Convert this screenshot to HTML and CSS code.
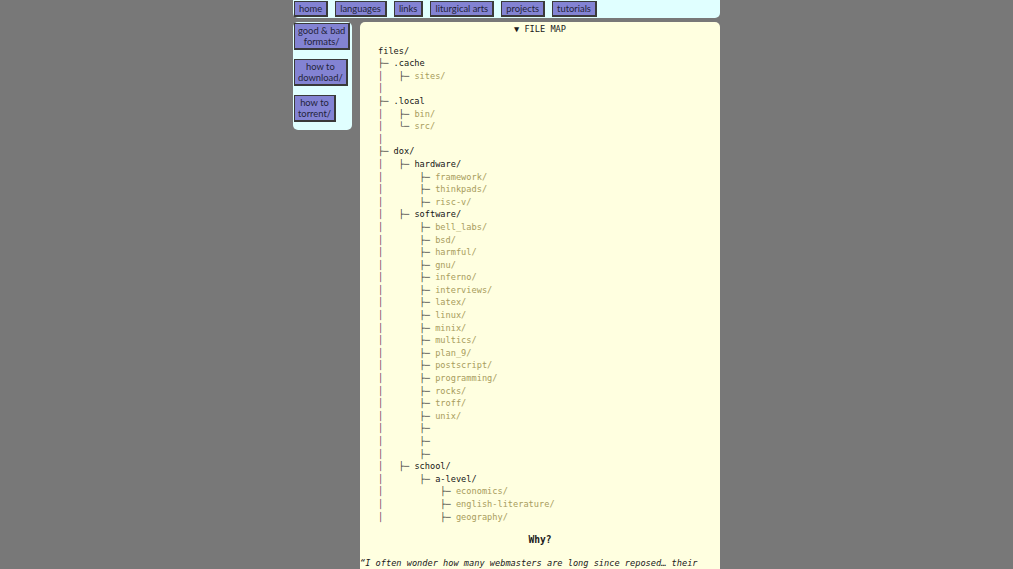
FILE: index.html
```html
<!DOCTYPE html>
<html>
<head>
<meta charset="utf-8">
<title>files</title>
<link rel="stylesheet" href="styles.css">
</head>
<body>
<div class="page">
  <nav class="topnav">
    <a class="btn" href="#">home</a>
    <a class="btn" href="#">languages</a>
    <a class="btn" href="#">links</a>
    <a class="btn" href="#">liturgical arts</a>
    <a class="btn" href="#">projects</a>
    <a class="btn" href="#">tutorials</a>
  </nav>
  <div class="layout">
    <aside class="sidebar">
      <a class="btn sbtn" href="#">good &amp; bad<br>formats/</a>
      <a class="btn sbtn" href="#">how to<br>download/</a>
      <a class="btn sbtn" href="#">how to<br>torrent/</a>
    </aside>
    <main class="content">
      <div class="summary">▼ FILE MAP</div>
<pre class="tree"><span class="d">files/</span>
<span class="b">├─</span> <span class="d">.cache</span>
<span class="v">│</span>   <span class="b">├─</span> <span class="f">sites/</span>
<span class="v">│</span>
<span class="b">├─</span> <span class="d">.local</span>
<span class="v">│</span>   <span class="b">├─</span> <span class="f">bin/</span>
<span class="v">│</span>   <span class="b">└─</span> <span class="f">src/</span>
<span class="v">│</span>
<span class="b">├─</span> <span class="d">dox/</span>
<span class="v">│</span>   <span class="b">├─</span> <span class="d">hardware/</span>
<span class="v">│</span>       <span class="b">├─</span> <span class="f">framework/</span>
<span class="v">│</span>       <span class="b">├─</span> <span class="f">thinkpads/</span>
<span class="v">│</span>       <span class="b">├─</span> <span class="f">risc-v/</span>
<span class="v">│</span>   <span class="b">├─</span> <span class="d">software/</span>
<span class="v">│</span>       <span class="b">├─</span> <span class="f">bell_labs/</span>
<span class="v">│</span>       <span class="b">├─</span> <span class="f">bsd/</span>
<span class="v">│</span>       <span class="b">├─</span> <span class="f">harmful/</span>
<span class="v">│</span>       <span class="b">├─</span> <span class="f">gnu/</span>
<span class="v">│</span>       <span class="b">├─</span> <span class="f">inferno/</span>
<span class="v">│</span>       <span class="b">├─</span> <span class="f">interviews/</span>
<span class="v">│</span>       <span class="b">├─</span> <span class="f">latex/</span>
<span class="v">│</span>       <span class="b">├─</span> <span class="f">linux/</span>
<span class="v">│</span>       <span class="b">├─</span> <span class="f">minix/</span>
<span class="v">│</span>       <span class="b">├─</span> <span class="f">multics/</span>
<span class="v">│</span>       <span class="b">├─</span> <span class="f">plan_9/</span>
<span class="v">│</span>       <span class="b">├─</span> <span class="f">postscript/</span>
<span class="v">│</span>       <span class="b">├─</span> <span class="f">programming/</span>
<span class="v">│</span>       <span class="b">├─</span> <span class="f">rocks/</span>
<span class="v">│</span>       <span class="b">├─</span> <span class="f">troff/</span>
<span class="v">│</span>       <span class="b">├─</span> <span class="f">unix/</span>
<span class="v">│</span>       <span class="b">├─</span>
<span class="v">│</span>       <span class="b">├─</span>
<span class="v">│</span>       <span class="b">├─</span>
<span class="v">│</span>   <span class="b">├─</span> <span class="d">school/</span>
<span class="v">│</span>       <span class="b">├─</span> <span class="d">a-level/</span>
<span class="v">│</span>           <span class="b">├─</span> <span class="f">economics/</span>
<span class="v">│</span>           <span class="b">├─</span> <span class="f">english-literature/</span>
<span class="v">│</span>           <span class="b">├─</span> <span class="f">geography/</span></pre>
      <h2 class="why">Why?</h2>
      <p class="quote">“I often wonder how many webmasters are long since reposed… their pages still linger on forgotten servers, waiting for a visitor who never comes.”</p>
    </main>
  </div>
</div>
</body>
</html>
```
FILE: styles.css
```css
html, body {
  margin: 0;
  padding: 0;
  background: #787878;
}
body {
  color: #1a1a1a;
  font-family: "DejaVu Sans Mono", monospace;
}
.page {
  width: 427px;
  margin: 0 auto;
}
.topnav {
  display: flex;
  gap: 7px;
  background: #e0ffff;
  border-radius: 0 0 5px 5px;
  padding: 1px;
  height: 16px;
}
.btn {
  display: block;
  background: #8383d3;
  color: #23233a;
  text-decoration: none;
  font-family: Lato, "Liberation Sans", sans-serif;
  font-size: 9.4px;
  line-height: 13px;
  padding: 0 4px;
  border-style: solid;
  border-color: #3a3a3a;
  border-width: 1px 2px 2px 1px;
  text-align: center;
  white-space: nowrap;
}
.layout {
  display: flex;
  gap: 8px;
  margin-top: 4px;
  align-items: flex-start;
}
.sidebar {
  width: 59px;
  box-sizing: border-box;
  background: #e0ffff;
  border-radius: 5px;
  padding: 1px 1px 8px 1px;
  display: flex;
  flex-direction: column;
  align-items: flex-start;
  gap: 9px;
}
.sbtn {
  line-height: 11px;
  padding: 1px 3px;
}
.content {
  width: 360px;
  background: #ffffe0;
  border-radius: 5px 5px 0 0;
  min-height: 560px;
  padding-top: 1px;
  font-size: 8.64px;
  line-height: 12.6px;
}
.summary {
  text-align: center;
}
.tree {
  margin: 9px 0 0 18px;
  font-family: "DejaVu Sans Mono", monospace;
  font-size: 8.64px;
  line-height: 12.6px;
}
.d { color: #151515; }
.f { color: #a89c5c; }
.b { color: #3a3a3a; }
.v { color: #5e3a5e; }
.why {
  text-align: center;
  font-size: 9.6px;
  line-height: 12.6px;
  font-weight: bold;
  margin: 11px 0 10px;
}
.quote {
  margin: 0;
  font-style: italic;
}
```
